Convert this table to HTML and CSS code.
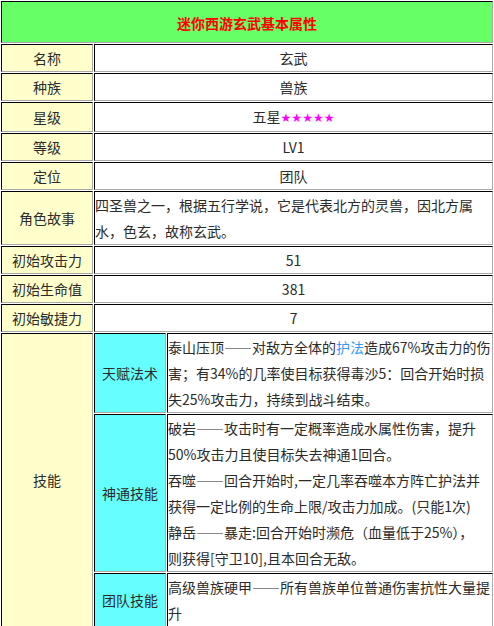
FILE: index.html
```html
<!DOCTYPE html>
<html lang="zh">
<head>
<meta charset="utf-8">
<title>迷你西游玄武基本属性</title>
<link rel="stylesheet" href="styles.css">
</head>
<body>
<table class="attr">
  <colgroup>
    <col class="c-label">
    <col class="c-sub">
    <col class="c-text">
  </colgroup>
  <tr>
    <td class="title" colspan="3">迷你西游玄武基本属性</td>
  </tr>
  <tr>
    <td class="label">名称</td>
    <td class="value" colspan="2">玄武</td>
  </tr>
  <tr>
    <td class="label">种族</td>
    <td class="value" colspan="2">兽族</td>
  </tr>
  <tr>
    <td class="label">星级</td>
    <td class="value" colspan="2">五星<span class="stars">★★★★★</span></td>
  </tr>
  <tr>
    <td class="label">等级</td>
    <td class="value" colspan="2">LV1</td>
  </tr>
  <tr>
    <td class="label">定位</td>
    <td class="value" colspan="2">团队</td>
  </tr>
  <tr>
    <td class="label">角色故事</td>
    <td class="text" colspan="2">四圣兽之一，根据五行学说，它是代表北方的灵兽，因北方属水，色玄，故称玄武。</td>
  </tr>
  <tr>
    <td class="label">初始攻击力</td>
    <td class="value" colspan="2">51</td>
  </tr>
  <tr>
    <td class="label">初始生命值</td>
    <td class="value" colspan="2">381</td>
  </tr>
  <tr>
    <td class="label">初始敏捷力</td>
    <td class="value" colspan="2">7</td>
  </tr>
  <tr>
    <td class="label" rowspan="3">技能</td>
    <td class="sub">天赋法术</td>
    <td class="text">泰山压顶——对敌方全体的<a class="link" href="#">护法</a>造成67%攻击力的伤害；有34%的几率使目标获得毒沙5：回合开始时损失25%攻击力，持续到战斗结束。</td>
  </tr>
  <tr>
    <td class="sub">神通技能</td>
    <td class="text">破岩——攻击时有一定概率造成水属性伤害，提升50%攻击力且使目标失去神通1回合。<br>吞噬——回合开始时,一定几率吞噬本方阵亡护法并获得一定比例的生命上限/攻击力加成。(只能1次)<br>静岳——暴走:回合开始时濒危（血量低于25%），<br>则获得[守卫10],且本回合无敌。</td>
  </tr>
  <tr>
    <td class="sub">团队技能</td>
    <td class="text">高级兽族硬甲——所有兽族单位普通伤害抗性大量提升</td>
  </tr>
</table>
</body>
</html>
```

FILE: styles.css
```css
html, body {
  margin: 0;
  padding: 0;
  background: #ffffff;
}

.attr {
  width: 494px;
  table-layout: fixed;
  border-collapse: separate;
  border-spacing: 1px;
  font-family: "Noto Sans CJK SC", "Noto Sans", sans-serif;
  font-size: 14px;
  line-height: 26px;
  color: #2b2b2b;
}

.c-label { width: 92px; }
.c-sub { width: 72px; }
.c-text { width: 326px; }

.attr td {
  padding: 0;
  border-style: solid;
  border-width: 1px;
  border-color: #000000 #aaaaaa #aaaaaa #000000;
  vertical-align: middle;
}

.attr td.title {
  background: #66ff66;
  color: #ff0000;
  font-weight: bold;
  text-align: center;
  padding: 8px 0 6px;
}

.attr td.label {
  background: #ffffcc;
  text-align: center;
}

.attr td.value {
  background: #ffffff;
  text-align: center;
}

.attr td.text {
  background: #ffffff;
  text-align: left;
}

.attr td.sub {
  background: #66ffff;
  text-align: center;
}

.stars {
  color: #ff00ff;
  font-family: "DejaVu Sans", sans-serif;
  font-size: 12px;
}

.link {
  color: #3399ff;
  text-decoration: none;
}
```
